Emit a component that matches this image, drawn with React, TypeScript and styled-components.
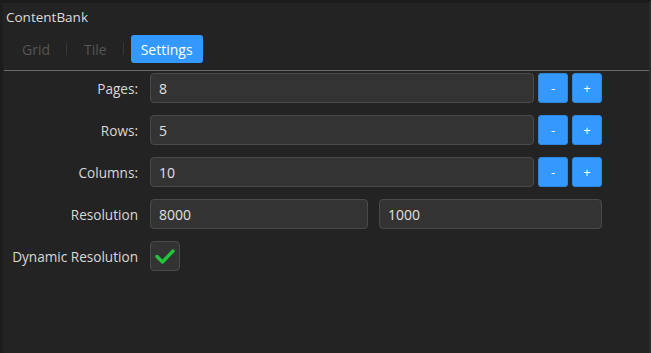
import React from 'react'
import styled, { createGlobalStyle } from 'styled-components'

const GlobalStyle = createGlobalStyle`
    html, body {
        margin:0;
        padding:0;
        background:#232323;
    }
    body {
        font-family: "Open Sans", "Liberation Sans", sans-serif;
    }
`;

export const Panel = styled.div`
    width:651px;
    height:353px;
    box-sizing:border-box;
    background:#232323;
    border-top:3px solid #1b1b1b;
    border-left:3px solid #1d1d1d;
    border-right:2px solid #2c2c2c;
    display:flex;
    flex-direction:column;
`;

export const Title = styled.div`
    color:#dcdcdc;
    font-size:13.5px;
    padding:5px 0 0 3px;
    height:24px;
    box-sizing:border-box;
`;

export const TabBar = styled.div`
    display:flex;
    align-items:center;
    height:30px;
    margin-top:7px;
    padding-left:8px;
    border-bottom:1px solid #6a6a6a;
    padding-bottom:6px;
    margin-left:1px;
`;

export const Tab = styled.div<{ $active?: boolean }>`
    height:28px;
    display:flex;
    align-items:center;
    padding:0 10px;
    font-size:14px;
    border-radius:3px;
    color:${p => p.$active ? '#fff' : '#555'};
    background:${p => p.$active ? '#3399ff' : 'transparent'};
`;

export const Sep = styled.div`
    width:1px;
    height:12px;
    background:#383838;
    margin:0 7px 0 6px;
`;

export const Form = styled.div`
    display:flex;
    flex-direction:column;
    gap:12px;
    padding-top:2px;
`;

export const Row = styled.div`
    display:grid;
    grid-template-columns:135px 1fr;
    column-gap:12px;
    align-items:center;
    width:599px;
`;

export const Label = styled.div`
    text-align:right;
    color:#d8d8d8;
    font-size:13.6px;
`;

export const Field = styled.div<{ $gap?: number }>`
    display:flex;
    gap:${p => p.$gap ?? 4}px;
`;

export const Input = styled.div<{ $w?: number }>`
    flex:${p => p.$w ? `0 0 ${p.$w}px` : '1'};
    height:30px;
    box-sizing:border-box;
    background:#333;
    border:1px solid #4a4a4a;
    border-radius:4px;
    color:#e0e0e0;
    font-size:14px;
    display:flex;
    align-items:center;
    padding-left:8px;
`;

export const StepBtn = styled.div`
    width:30px;
    height:30px;
    box-sizing:border-box;
    background:#3399ff;
    border:1px solid #2e87dd;
    border-radius:3px;
    color:#fff;
    font-size:13px;
    display:flex;
    align-items:center;
    justify-content:center;
`;

export const Check = styled.div`
    width:30px;
    height:30px;
    box-sizing:border-box;
    background:#333;
    border:1px solid #4a4a4a;
    border-radius:4px;
    display:flex;
    align-items:center;
    justify-content:center;
`;

const Stepper = ({ label, value }: { label: string; value: string }) => (
    <Row>
        <Label>{label}</Label>
        <Field>
            <Input>{value}</Input>
            <StepBtn>-</StepBtn>
            <StepBtn>+</StepBtn>
        </Field>
    </Row>
);

const App = () => <>
    <GlobalStyle />
    <Panel>
        <Title>ContentBank</Title>
        <TabBar>
            <Tab>Grid</Tab>
            <Sep />
            <Tab>Tile</Tab>
            <Sep />
            <Tab $active>Settings</Tab>
        </TabBar>
        <Form>
            <Stepper label="Pages:" value="8" />
            <Stepper label="Rows:" value="5" />
            <Stepper label="Columns:" value="10" />
            <Row>
                <Label>Resolution</Label>
                <Field $gap={11}>
                    <Input $w={218}>8000</Input>
                    <Input>1000</Input>
                </Field>
            </Row>
            <Row>
                <Label>Dynamic Resolution</Label>
                <Field>
                    <Check>
                        <svg width="20" height="16" viewBox="0 0 20 16">
                            <path d="M2 8.5 L7.5 14 L18 3" fill="none" stroke="#22c43a" strokeWidth="3.4" strokeLinecap="round" strokeLinejoin="round" />
                        </svg>
                    </Check>
                </Field>
            </Row>
        </Form>
    </Panel>
</>
export default App
